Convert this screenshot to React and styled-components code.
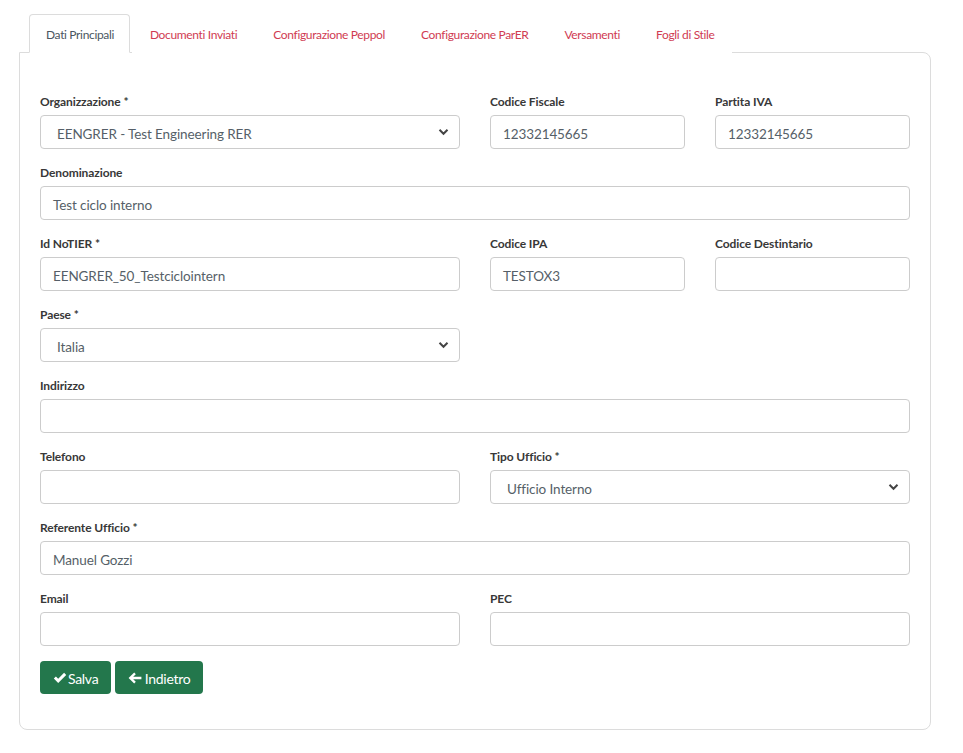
import React from 'react'
import styled, { createGlobalStyle } from 'styled-components'

const GlobalStyle = createGlobalStyle`
  body {
    margin: 0;
    background: #fff;
    font-family: Lato, "Noto Sans", sans-serif;
    color: #333;
  }
  * { box-sizing: border-box; }
`

const Page = styled.div`
  padding: 14px 32px 22px 19px;
  width: 963px;
`

const TabList = styled.ul`
  display: flex;
  list-style: none;
  margin: 0 0 0 10px;
  padding: 0;
  position: relative;
  z-index: 1;
`

const Tab = styled.li`
  height: 39px;
  display: flex;
  align-items: center;
  padding: 2px ${(p) => (p.active ? '15px' : '17px')} 0 ${(p) => (p.active ? '16px' : '17px')};
  font-size: 12px;
  letter-spacing: -0.35px;
  color: ${(p) => (p.active ? '#4a5661' : '#d03b52')};
  border: 1px solid ${(p) => (p.active ? '#dcdcdc' : 'transparent')};
  border-bottom-color: ${(p) => (p.active ? '#fff' : 'transparent')};
  border-radius: 4px 4px 0 0;
  background: #fff;
  cursor: pointer;
  margin-right: ${(p) => (p.active ? '2px' : '0')};
`

const Panel = styled.div`
  margin-top: -1px;
  border: 1px solid #dcdcdc;
  border-radius: 0 8px 8px 8px;
  padding: 40px 20px 35px 20px;
`

const Row = styled.div`
  display: grid;
  grid-template-columns: ${(p) => p.cols || '420px 195px 195px'};
  column-gap: 30px;
`

const Field = styled.div`
  grid-column: ${(p) => p.span || 'auto'};
  margin-bottom: 15px;
`

const Label = styled.label`
  display: block;
  height: 18px;
  line-height: 18px;
  margin-bottom: 4px;
  font-size: 12px;
  font-weight: 700;
  color: #383838;
  letter-spacing: -0.1px;
`

const Input = styled.div`
  height: 34px;
  border: 1px solid #cccccc;
  border-radius: 4px;
  padding: 3px 12px 0;
  display: flex;
  align-items: center;
  font-size: 13.5px;
  color: #565f68;
  background: #fff;
  letter-spacing: -0.1px;
`

const Select = styled(Input)`
  padding: 3px 10px 0 16px;
  justify-content: space-between;
`

const Chevron = () => (
  <svg width="11" height="8" viewBox="0 0 11 8" style={{ marginTop: -3 }}>
    <path d="M1.5 1.8 L5.5 5.8 L9.5 1.8" fill="none" stroke="#444" strokeWidth="2" />
  </svg>
)

const Actions = styled.div`
  display: flex;
  gap: 4px;
`

const Button = styled.button`
  height: 33px;
  display: flex;
  align-items: center;
  gap: ${(p) => p.gap || '2px'};
  padding: 1px ${(p) => p.pad || '13px'} 0;
  border: none;
  border-radius: 4px;
  background: #23774c;
  color: #fff;
  font-family: Lato, "Noto Sans", sans-serif;
  font-size: 14px;
  letter-spacing: -0.3px;
  cursor: pointer;
`

const CheckIcon = () => (
  <svg width="14" height="12" viewBox="0 0 14 12">
    <path d="M0.8 6.5 L2.9 4.4 L5.2 6.7 L11.1 0.8 L13.2 2.9 L5.2 10.9 Z" fill="#fff" />
  </svg>
)

const ArrowIcon = () => (
  <svg width="14" height="12" viewBox="0 0 14 12">
    <path d="M6.2 0.6 L7.8 2.2 L5.2 4.7 L13.4 4.7 L13.4 7.3 L5.2 7.3 L7.8 9.8 L6.2 11.4 L0.6 6 Z" fill="#fff" />
  </svg>
)

const tabs = [
  'Dati Principali',
  'Documenti Inviati',
  'Configurazione Peppol',
  'Configurazione ParER',
  'Versamenti',
  'Fogli di Stile',
]

const App = () => {
  return (
    <Page>
      <GlobalStyle />
      <TabList>
        {tabs.map((t, i) => (
          <Tab key={t} active={i === 0}>
            {t}
          </Tab>
        ))}
      </TabList>
      <Panel>
        <Row>
          <Field>
            <Label>Organizzazione *</Label>
            <Select>
              EENGRER - Test Engineering RER
              <Chevron />
            </Select>
          </Field>
          <Field>
            <Label>Codice Fiscale</Label>
            <Input>12332145665</Input>
          </Field>
          <Field>
            <Label>Partita IVA</Label>
            <Input>12332145665</Input>
          </Field>

          <Field span="1 / -1">
            <Label>Denominazione</Label>
            <Input>Test ciclo interno</Input>
          </Field>

          <Field>
            <Label>Id NoTIER *</Label>
            <Input>EENGRER_50_Testciclointern</Input>
          </Field>
          <Field>
            <Label>Codice IPA</Label>
            <Input>TESTOX3</Input>
          </Field>
          <Field>
            <Label>Codice Destintario</Label>
            <Input />
          </Field>

          <Field span="1 / 2">
            <Label>Paese *</Label>
            <Select>
              Italia
              <Chevron />
            </Select>
          </Field>

          <Field span="1 / -1">
            <Label>Indirizzo</Label>
            <Input />
          </Field>
        </Row>
        <Row cols="420px 420px">
          <Field>
            <Label>Telefono</Label>
            <Input />
          </Field>
          <Field>
            <Label>Tipo Ufficio *</Label>
            <Select>
              Ufficio Interno
              <Chevron />
            </Select>
          </Field>

          <Field span="1 / -1">
            <Label>Referente Ufficio *</Label>
            <Input>Manuel Gozzi</Input>
          </Field>

          <Field>
            <Label>Email</Label>
            <Input />
          </Field>
          <Field>
            <Label>PEC</Label>
            <Input />
          </Field>
        </Row>
        <Actions>
          <Button pad="13px" gap="1px">
            <CheckIcon />
            Salva
          </Button>
          <Button pad="12.5px" gap="3px">
            <ArrowIcon />
            Indietro
          </Button>
        </Actions>
      </Panel>
    </Page>
  )
}

export default App
